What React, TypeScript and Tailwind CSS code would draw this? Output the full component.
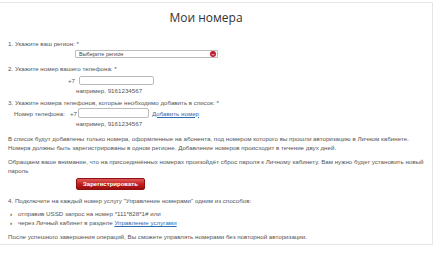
export default function App() {
  return (
    <div className="w-[434px] h-[256px] bg-white pt-[2px]" style={{ fontFamily: '"Liberation Sans", Arial, sans-serif' }}>
      <div className="w-[433px] h-[243px] border-t border-r border-b border-[#e6e6e6] text-[#555] text-[6.2px] leading-[9px]">
        {/* title */}
        <h1
          className="pt-[7px] pr-[20px] text-center text-[12px] leading-[16px] text-[#333]"
          style={{ fontFamily: '"Open Sans", sans-serif' }}
        >
          Мои номера
        </h1>

        <div className="pl-[8px] pr-[8px]">
          <p className="mt-[12.5px]">1. Укажите ваш регион: *</p>
          <div className="ml-[67px] mt-[2.5px] w-[143px] h-[8px] border border-[#bbb] rounded-[1px] flex items-center justify-between pl-[3px] pr-[1px] text-[5.5px] leading-[6px] text-[#444]">
            <span>Выберите регион</span>
            <span className="w-[6px] h-[6px] rounded-full bg-[#c0182a] flex items-center justify-center">
              <svg width="4" height="3" viewBox="0 0 4 3">
                <path d="M0.5 0.8 L2 2.3 L3.5 0.8" stroke="#fff" strokeWidth="0.8" fill="none" />
              </svg>
            </span>
          </div>

          <p className="mt-[5.5px]">2. Укажите номер вашего телефона: *</p>
          <div className="flex items-center mt-[3.5px] h-[9px]">
            <span className="ml-[60px] w-[11px]">+7</span>
            <span className="w-[75px] h-[9px] border border-[#bbb] rounded-[2px] bg-white" />
          </div>
          <p className="ml-[68px] mt-[0.5px]">например, 9161234567</p>

          <p className="mt-[3px]">3. Укажите номера телефонов, которые необходимо добавить в список: *</p>
          <div className="flex items-center mt-[1.5px] h-[10px]">
            <span className="ml-[6px] w-[56px]">Номер телефона:</span>
            <span className="w-[8px]">+7</span>
            <span className="w-[71px] h-[10px] border border-[#bbb] rounded-[2px] bg-white" />
            <a className="ml-[3px] text-[#2a6db5] underline">Добавить номер</a>
          </div>
          <p className="ml-[68px] mt-[0.5px]">например, 9161234567</p>

          <p className="mt-[6.5px]">
            В список будут добавлены только номера, оформленные на абонента, под номером которого вы прошли авторизацию в Личном кабинете. Номера должны быть зарегистрированы в одном регионе. Добавление номеров происходит в течение двух дней.
          </p>
          <p className="mt-[5px]">
            Обращаем ваше внимание, что на присоединённых номерах произойдёт сброс пароля к Личному кабинету. Вам нужно будет установить новый пароль
          </p>

          <button className="block ml-[68px] mt-[2.5px] w-[69px] h-[12px] rounded-[2px] border border-[#8e1010] bg-gradient-to-b from-[#e05858] via-[#c42020] to-[#9a0d0d] text-white text-[6px] leading-[10px] font-bold">
            Зарегистрировать
          </button>

          <p className="mt-[6.5px]">
            4. Подключите на каждый номер услугу "Управление номерами" одним из способов:
          </p>
          <ul className="mt-[4px] ml-[2px]">
            <li className="flex items-center">
              <span className="w-[8px] text-[#333] font-bold">›</span>
              отправив USSD запрос на номер *111*828*1# или
            </li>
            <li className="flex items-center">
              <span className="w-[8px] text-[#333] font-bold">›</span>
              через Личный кабинет в разделе&nbsp;<a className="text-[#2a6db5] underline">Управление услугами</a>
            </li>
          </ul>
          <p className="mt-[4.5px]">
            После успешного завершения операций, Вы сможете управлять номерами без повторной авторизации.
          </p>
        </div>
      </div>
    </div>
  )
}
